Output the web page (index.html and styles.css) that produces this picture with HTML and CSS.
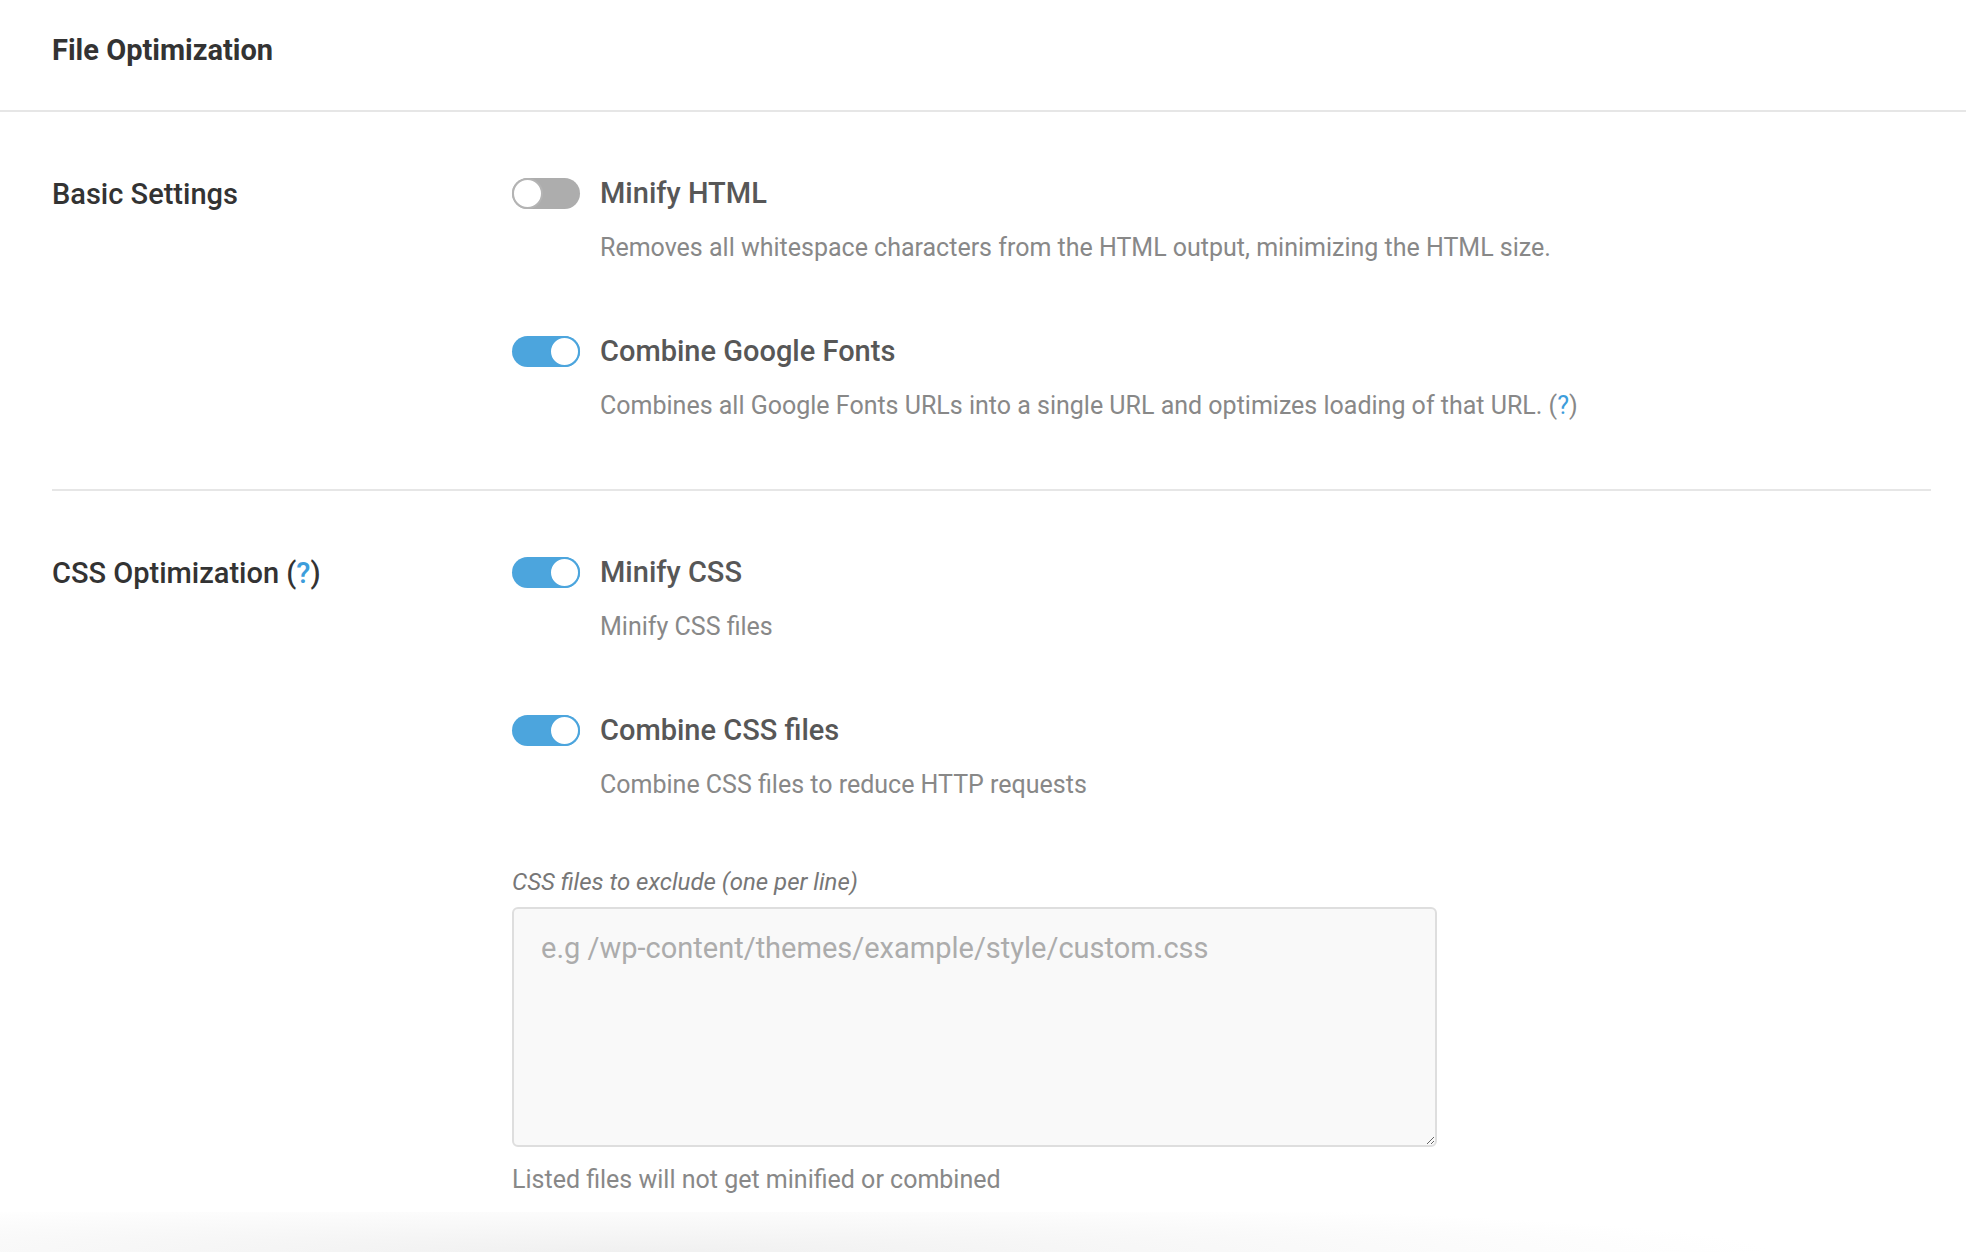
FILE: index.html
```html
<!DOCTYPE html>
<html lang="en">
<head>
<meta charset="UTF-8">
<meta name="viewport" content="width=device-width, initial-scale=1.0">
<title>File Optimization</title>
<link rel="stylesheet" href="styles.css">
</head>
<body>
<div class="page-header">
<h1>File Optimization</h1>
</div>
<div class="content">
<div class="section">
<h2 class="section-label">Basic Settings</h2>
<div class="options">
<div class="option">
<div class="option-head">
<span class="toggle"></span>
<span class="option-title">Minify HTML</span>
</div>
<p class="option-desc">Removes all whitespace characters from the HTML output, minimizing the HTML size.</p>
</div>
<div class="option">
<div class="option-head">
<span class="toggle on"></span>
<span class="option-title">Combine Google Fonts</span>
</div>
<p class="option-desc">Combines all Google Fonts URLs into a single URL and optimizes loading of that URL. (<a href="#" class="help">?</a>)</p>
</div>
</div>
</div>
<div class="section">
<h2 class="section-label">CSS Optimization (<a href="#" class="help">?</a>)</h2>
<div class="options">
<div class="option">
<div class="option-head">
<span class="toggle on"></span>
<span class="option-title">Minify CSS</span>
</div>
<p class="option-desc">Minify CSS files</p>
</div>
<div class="option">
<div class="option-head">
<span class="toggle on"></span>
<span class="option-title">Combine CSS files</span>
</div>
<p class="option-desc">Combine CSS files to reduce HTTP requests</p>
</div>
<div class="exclude">
<label class="exclude-label" for="exclude-css">CSS files to exclude (one per line)</label>
<textarea id="exclude-css" placeholder="e.g /wp-content/themes/example/style/custom.css"></textarea>
<p class="exclude-note">Listed files will not get minified or combined</p>
</div>
</div>
</div>
</div>
<div class="bottom-shade"></div>
</body>
</html>
```

FILE: styles.css
```css
body {
margin: 0;
font-family: Roboto, 'Liberation Sans', sans-serif;
background-color: #fff;
color: #333;
overflow: hidden;
}
.page-header {
height: 112px;
box-sizing: border-box;
padding: 33px 52px 0;
border-bottom: 2px solid #e6e6e6;
}
.page-header h1 {
margin: 0;
font-size: 29px;
font-weight: 700;
line-height: 34px;
color: #333;
}
.content {
padding: 0 35px 0 52px;
}
.section {
display: grid;
grid-template-columns: 460px 1fr;
padding: 66px 0 65px;
border-bottom: 2px solid #e6e6e6;
}
.section:last-child {
border-bottom: none;
padding-bottom: 0;
}
.section-label {
margin: 0;
font-size: 29px;
font-weight: 500;
line-height: 33px;
color: #333;
}
.help {
color: #3d9ddb;
text-decoration: none;
}
.options {
display: flex;
flex-direction: column;
gap: 70px;
}
.option-head {
display: flex;
align-items: center;
gap: 20px;
}
.toggle {
position: relative;
width: 68px;
height: 31px;
border-radius: 16px;
background-color: #adadad;
flex-shrink: 0;
}
.toggle::after {
content: "";
position: absolute;
top: 0;
left: 0;
width: 31px;
height: 31px;
box-sizing: border-box;
border-radius: 50%;
border: 2px solid #b4b4b4;
background-color: #fff;
}
.toggle.on {
background-color: #4ca5dd;
}
.toggle.on::after {
left: auto;
right: 0;
border-color: #4ca5dd;
}
.option-title {
font-size: 29px;
font-weight: 500;
line-height: 31px;
color: #575757;
}
.option-desc {
margin: 21px 0 0 88px;
font-size: 25px;
line-height: 36px;
color: #888;
}
.exclude {
display: flex;
flex-direction: column;
margin-top: -6px;
}
.exclude-label {
font-size: 24px;
font-style: italic;
line-height: 30px;
color: #777;
margin-bottom: 10px;
}
.exclude textarea {
width: 925px;
height: 240px;
box-sizing: border-box;
padding: 19px 27px;
border: 2px solid #dedede;
border-radius: 6px;
background-color: #f9f9f9;
font-family: Roboto, 'Liberation Sans', sans-serif;
font-size: 29px;
line-height: 40px;
color: #555;
}
.exclude textarea::placeholder {
color: #acacac;
}
.exclude-note {
margin: 15px 0 0;
font-size: 25px;
line-height: 36px;
color: #888;
}
.bottom-shade {
height: 40px;
margin-top: 14px;
background: radial-gradient(ellipse 58% 130% at 32% 100%, #f0f0f0 0%, #f7f7f7 45%, rgba(255, 255, 255, 0) 100%);
}
```
